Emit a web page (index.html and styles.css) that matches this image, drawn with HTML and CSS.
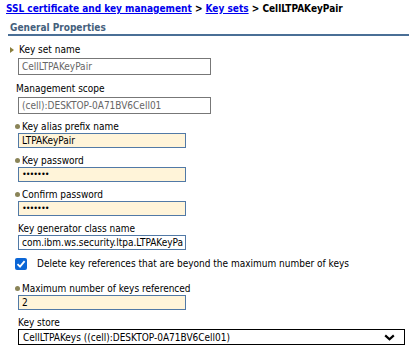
FILE: index.html
```html
<!DOCTYPE html>
<html lang="en">
<head>
<meta charset="UTF-8">
<title>CellLTPAKeyPair</title>
<link rel="stylesheet" href="styles.css">
</head>
<body>

<div class="crumbs">
  <a href="#">SSL certificate and key management</a> &gt; <a href="#">Key sets</a> &gt; CellLTPAKeyPair
</div>

<div class="section">
  <h2 class="section-title">General Properties</h2>

  <div class="field first">
    <div class="label arrow-label"><span class="arrow"></span>Key set name</div>
    <div class="input readonly">CellLTPAKeyPair</div>
  </div>

  <div class="field gap">
    <div class="label plain">Management scope</div>
    <div class="input readonly">(cell):DESKTOP-0A71BV6Cell01</div>
  </div>

  <div class="field">
    <div class="label req"><span class="dot"></span>Key alias prefix name</div>
    <div class="input edit">LTPAKeyPair</div>
  </div>

  <div class="field">
    <div class="label req"><span class="dot"></span>Key password</div>
    <div class="input edit pw">&bull;&bull;&bull;&bull;&bull;&bull;&bull;</div>
  </div>

  <div class="field">
    <div class="label req"><span class="dot"></span>Confirm password</div>
    <div class="input edit pw">&bull;&bull;&bull;&bull;&bull;&bull;&bull;</div>
  </div>

  <div class="field">
    <div class="label">Key generator class name</div>
    <div class="input edit white">com.ibm.ws.security.ltpa.LTPAKeyPa</div>
  </div>

  <div class="check-row">
    <span class="checkbox">
      <svg width="10" height="10" viewBox="0 0 10 10"><path d="M1.5 5.2 L4 7.6 L8.6 2.2" fill="none" stroke="#fff" stroke-width="1.8"/></svg>
    </span>
    <span>Delete key references that are beyond the maximum number of keys</span>
  </div>

  <div class="field after-check">
    <div class="label req"><span class="dot"></span>Maximum number of keys referenced</div>
    <div class="input edit">2</div>
  </div>

  <div class="field">
    <div class="label">Key store</div>
    <div class="select">
      <span>CellLTPAKeys ((cell):DESKTOP-0A71BV6Cell01)</span>
      <svg width="11" height="7" viewBox="0 0 11 7"><path d="M1.2 1.4 L5.5 5.2 L9.8 1.4" fill="none" stroke="#000" stroke-width="2.2"/></svg>
    </div>
  </div>
</div>

</body>
</html>
```

FILE: styles.css
```css
body {
  margin: 0;
  font-family: "DejaVu Sans Condensed", "DejaVu Sans", sans-serif;
  font-size: 10px;
  color: #000;
  background: #fff;
}

.crumbs {
  padding: 3px 6px 0 6px;
  height: 14px;
  line-height: 12px;
  font-size: 10px;
  font-weight: bold;
  white-space: nowrap;
}

.crumbs a {
  color: #0000ee;
}

.section {
  margin: 0 2px 0 8px;
}

.section-title {
  margin: 0;
  padding: 3px 0 0 2px;
  height: 14px;
  line-height: 15px;
  font-size: 10px;
  font-weight: bold;
  color: #44607c;
  border-bottom: 2px solid #4a6f96;
}

.field {
  margin: 6px 0 0 10px;
}

.field.first {
  margin-top: 7px;
}

.field.gap {
  margin-top: 7px;
}

.field.after-check {
  margin-top: 12px;
}

.label {
  line-height: 13px;
  height: 13px;
  white-space: nowrap;
}

.arrow-label {
  margin-left: -8px;
}

.arrow {
  display: inline-block;
  width: 0;
  height: 0;
  border-top: 3px solid transparent;
  border-bottom: 3px solid transparent;
  border-left: 4px solid #8a7f3d;
  margin: 0 5px 0 0;
  vertical-align: 0;
}

.plain {
  margin: 0 0 0 -2px;
}

.req {
  margin-left: -3px;
}

.dot {
  display: inline-block;
  width: 5px;
  height: 5px;
  border-radius: 50%;
  background: #8a8458;
  margin-right: 2px;
  vertical-align: 1px;
}

.input {
  box-sizing: border-box;
  white-space: nowrap;
  overflow: hidden;
  padding: 0 3px;
}

.readonly {
  margin-top: 2px;
  height: 17px;
  line-height: 15px;
  border: 1px solid #777;
  color: #666;
  width: 193px;
}

.edit {
  width: 168px;
  height: 15px;
  line-height: 13px;
  border: 1px solid #5179a6;
  background: #fff4d9;
}

.edit.white {
  background: #fff;
}

.pw {
  font-size: 9px;
  letter-spacing: -1px;
}

.check-row {
  display: flex;
  align-items: center;
  margin: 7px 0 0 7px;
  height: 13px;
}

.checkbox {
  display: inline-flex;
  align-items: center;
  justify-content: center;
  width: 12px;
  height: 12px;
  border-radius: 2px;
  background: #0b66d6;
  margin-right: 10px;
}

.select {
  display: flex;
  justify-content: space-between;
  align-items: center;
  box-sizing: border-box;
  width: 387px;
  height: 16px;
  border: 1px solid #000;
  padding: 0 9px 0 4px;
}
```
